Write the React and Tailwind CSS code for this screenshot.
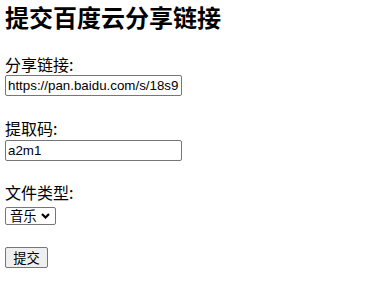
import React from "react";

const cjk = "font-['Microsoft_YaHei','Noto_Sans_CJK_SC',sans-serif]";
const latin = "font-['Liberation_Sans','Noto_Sans_CJK_SC',sans-serif]";

const App = () => {
  return (
    <div className={`min-h-[295px] bg-white pl-[5px] text-black ${cjk}`}>
      {/* Title */}
      <h2 className="pt-[3px] text-[24px] font-bold leading-[28px]">
        提交百度云分享链接
      </h2>

      <form className="flex flex-col items-start">
        {/* Share link */}
        <label className="mt-[24px] text-[16px] leading-[18px]">分享链接:</label>
        <input
          type="text"
          defaultValue="https://pan.baidu.com/s/18s9kQ2xLmPzR7aWbT"
          className={`mt-[2px] h-[21px] w-[177px] rounded-[2px] border border-[#767676] bg-white px-[2px] text-[13.33px] outline-none ${latin}`}
        />

        {/* Extract code */}
        <label className="mt-[23px] text-[16px] leading-[18px]">提取码:</label>
        <input
          type="text"
          defaultValue="a2m1"
          className={`mt-[3px] h-[21px] w-[177px] rounded-[2px] border border-[#767676] bg-white px-[2px] text-[13.33px] outline-none ${latin}`}
        />

        {/* File type */}
        <label className="mt-[22px] text-[16px] leading-[18px]">文件类型:</label>
        <div className="relative mt-[6px] flex">
          <select
            defaultValue="music"
            className="h-[18px] w-[51px] appearance-none rounded-[2px] border border-[#767676] bg-white pl-[4px] text-[13.33px] leading-[16px] outline-none"
          >
            <option value="music">音乐</option>
            <option value="video">视频</option>
            <option value="doc">文档</option>
            <option value="other">其他</option>
          </select>
          <svg
            className="pointer-events-none absolute left-[36px] top-[6px]"
            width="9"
            height="6"
            viewBox="0 0 9 6"
          >
            <path d="M1 1l3.5 3.5L8 1" fill="none" stroke="#000" strokeWidth="2.2" />
          </svg>
        </div>

        {/* Submit */}
        <button
          type="button"
          className="mt-[22px] h-[21px] w-[43px] rounded-[2px] border border-[#767676] bg-[#efefef] text-[13.33px] leading-[17px]"
        >
          提交
        </button>
      </form>
    </div>
  );
};

export default App;
